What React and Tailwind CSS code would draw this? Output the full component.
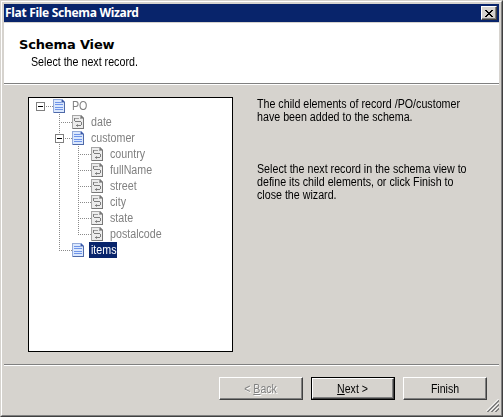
import React from "react";

const V_DOTS = "bg-[repeating-linear-gradient(to_bottom,#8a8a8a_0px,#8a8a8a_1px,transparent_1px,transparent_2px)]";
const H_DOTS = "bg-[repeating-linear-gradient(to_right,#8a8a8a_0px,#8a8a8a_1px,transparent_1px,transparent_2px)]";

function RecordIcon() {
  return (
    <svg width="12" height="14" viewBox="0 0 12 14" shapeRendering="crispEdges" className="block shrink-0">
      <path d="M0 0H9L12 3V14H0Z" fill="#93a9d8" />
      <path d="M1 1H8V4H11V13H1Z" fill="#dbe8fd" />
      <path d="M9 1h1v1h1v1h-2z" fill="#3c58a8" />
      <path d="M2 3h6v1H2zM2 5h8v1H2zM2 8h8v1H2zM2 10h8v1H2z" fill="#6f94e8" />
      <path d="M11 3h1v11H1v-1h10z" fill="#4e69a8" />
    </svg>
  );
}

function FieldIcon() {
  return (
    <svg width="12" height="14" viewBox="0 0 12 14" shapeRendering="crispEdges" className="block shrink-0">
      <path d="M0 0H9L12 3V14H0Z" fill="#a6a6a6" />
      <path d="M1 1H8V4H11V13H1Z" fill="#ececec" />
      <path d="M11 3h1v11H1v-1h10zM9 1h1v1h1v1h-2z" fill="#787878" />
      <path d="M2 3h1v3H2zM3 6h6v1H3zM9 7h1v3H9zM4 10h5v1H4z" fill="#7d7d7d" />
      <path d="M3 3h4v1H3zM5 9h1v1H5zM5 11h1v1H5z" fill="#a0a0a0" />
    </svg>
  );
}

const rows = [
  { label: "PO", level: 0, kind: "record", open: true },
  { label: "date", level: 1, kind: "field" },
  { label: "customer", level: 1, kind: "record", open: true },
  { label: "country", level: 2, kind: "field" },
  { label: "fullName", level: 2, kind: "field" },
  { label: "street", level: 2, kind: "field" },
  { label: "city", level: 2, kind: "field" },
  { label: "state", level: 2, kind: "field" },
  { label: "postalcode", level: 2, kind: "field", last: true },
  { label: "items", level: 1, kind: "record", last: true, selected: true },
];

function TreeRow({ row }) {
  return (
    <div className="flex h-4 pl-[2px]">
      {row.level === 1 && <div className="w-[19px] shrink-0" />}
      {row.level > 1 && (
        <>
          <div className="w-[19px] shrink-0" />
          <div className="w-[19px] shrink-0" />
        </>
      )}
      <div className="relative flex w-[22px] shrink-0 pl-[9px]">
        {row.level > 1 && <div className={"-ml-[19px] mr-[18px] h-4 w-px shrink-0 " + V_DOTS} />}
        <div className={"w-px shrink-0 " + (row.level === 0 ? "h-0" : row.last ? "h-[9px] " + V_DOTS : "h-4 " + V_DOTS)} />
        <div className={"mt-2 ml-px h-px flex-1 " + H_DOTS} />
        {row.open && (
          <div className="absolute top-1 left-[5px] flex h-[9px] w-[9px] items-center justify-center border border-[#808080] bg-white">
            <div className="h-px w-[5px] bg-black" />
          </div>
        )}
      </div>
      <div className="pt-px">{row.kind === "record" ? <RecordIcon /> : <FieldIcon />}</div>
      <div
        className={
          "ml-[5px] h-4 px-[2px] leading-4 whitespace-nowrap " +
          (row.selected ? "w-7 bg-[#08246b] text-white" : "text-[#808080]")
        }
      >
        <span className="inline-block origin-left scale-x-[0.89]">{row.label}</span>
      </div>
    </div>
  );
}

function Divider() {
  return <div className="h-[2px] shrink-0 border-t border-b border-t-[#808080] border-b-white" />;
}

const raised = "border border-t-white border-l-white border-r-[#404040] border-b-[#404040] shadow-[inset_-1px_-1px_0_#808080]";

export default function App() {
  return (
    <div className="h-[417px] w-[503px] overflow-hidden border border-t-[#d6d3ce] border-r-[#404040] border-b-[#404040] border-l-[#d6d3ce] bg-[#d6d3ce] font-['Liberation_Sans',sans-serif] text-[12px] text-black">
      <div className="flex h-full flex-col border border-t-white border-r-[#808080] border-b-[#808080] border-l-white pt-[2px] pr-[2px] pl-[2px]">
        <div className="flex h-[18px] shrink-0 items-center justify-between bg-[#08246b] pr-[2px] pl-[1px]">
          <span className="font-['Noto_Sans',sans-serif] text-[12px] leading-[18px] font-bold tracking-[-0.3px] whitespace-nowrap text-white">
            Flat File Schema Wizard
          </span>
          <button className={"flex h-[14px] w-4 items-center justify-center bg-[#d6d3ce] pr-px " + raised}>
            <svg width="8" height="7" viewBox="0 0 8 7" shapeRendering="crispEdges">
              <path d="M0 0h2v1H0zM6 0h2v1H6zM1 1h2v1H1zM5 1h2v1H5zM2 2h4v1H2zM3 3h2v1H3zM2 4h4v1H2zM1 5h2v1H1zM5 5h2v1H5zM0 6h2v1H0zM6 6h2v1H6z" fill="#000" />
            </svg>
          </button>
        </div>
        <header className="mt-px h-[60px] shrink-0 bg-white pt-[14px] pl-[15px]">
          <h1 className="font-['DejaVu_Sans',sans-serif] text-[13px] leading-4 font-bold tracking-[-0.15px] whitespace-nowrap">Schema View</h1>
          <p className="mt-[2px] ml-3 origin-left scale-x-[0.89] leading-[14px] whitespace-nowrap">Select the next record.</p>
        </header>
        <Divider />
        <main className="flex h-[279px] shrink-0 pt-3 pl-6">
          <div className="h-[255px] w-[205px] shrink-0 border border-black bg-white">
            {rows.map((row) => (
              <TreeRow key={row.label} row={row} />
            ))}
          </div>
          <div className="ml-6 origin-left scale-x-[0.89] pt-px leading-[13px] whitespace-nowrap">
            <p>
              The child elements of record /PO/customer
              <br />
              have been added to the schema.
            </p>
            <p className="mt-[39px]">
              Select the next record in the schema view to
              <br />
              define its child elements, or click Finish to
              <br />
              close the wizard.
            </p>
          </div>
        </main>
        <Divider />
        <footer className="relative flex flex-1 justify-end gap-2 pt-[11px] pr-3">
          <button className={"h-[23px] w-[84px] text-[#808080] [text-shadow:1px_1px_0_#fff] " + raised}>
            <span className="inline-block scale-x-[0.88]">
              &lt; <span className="underline">B</span>ack
            </span>
          </button>
          <div className="h-[23px] w-[84px] border border-black">
            <button className={"block h-full w-full " + raised}>
              <span className="inline-block scale-x-[0.88]">
                <span className="underline">N</span>ext &gt;
              </span>
            </button>
          </div>
          <button className={"h-[23px] w-[84px] " + raised}>
            <span className="inline-block scale-x-[0.88]">Finish</span>
          </button>
          <svg width="13" height="13" viewBox="0 0 13 13" className="absolute right-0 bottom-[3px]">
            <path d="M0 12.5L12.5 0M4 12.5L12.5 4M8 12.5L12.5 8" stroke="#fff" />
            <path d="M1 13L13 1M2 13L13 2M5 13L13 5M6 13L13 6M9 13L13 9M10 13L13 10" stroke="#808080" />
          </svg>
        </footer>
      </div>
    </div>
  );
}
